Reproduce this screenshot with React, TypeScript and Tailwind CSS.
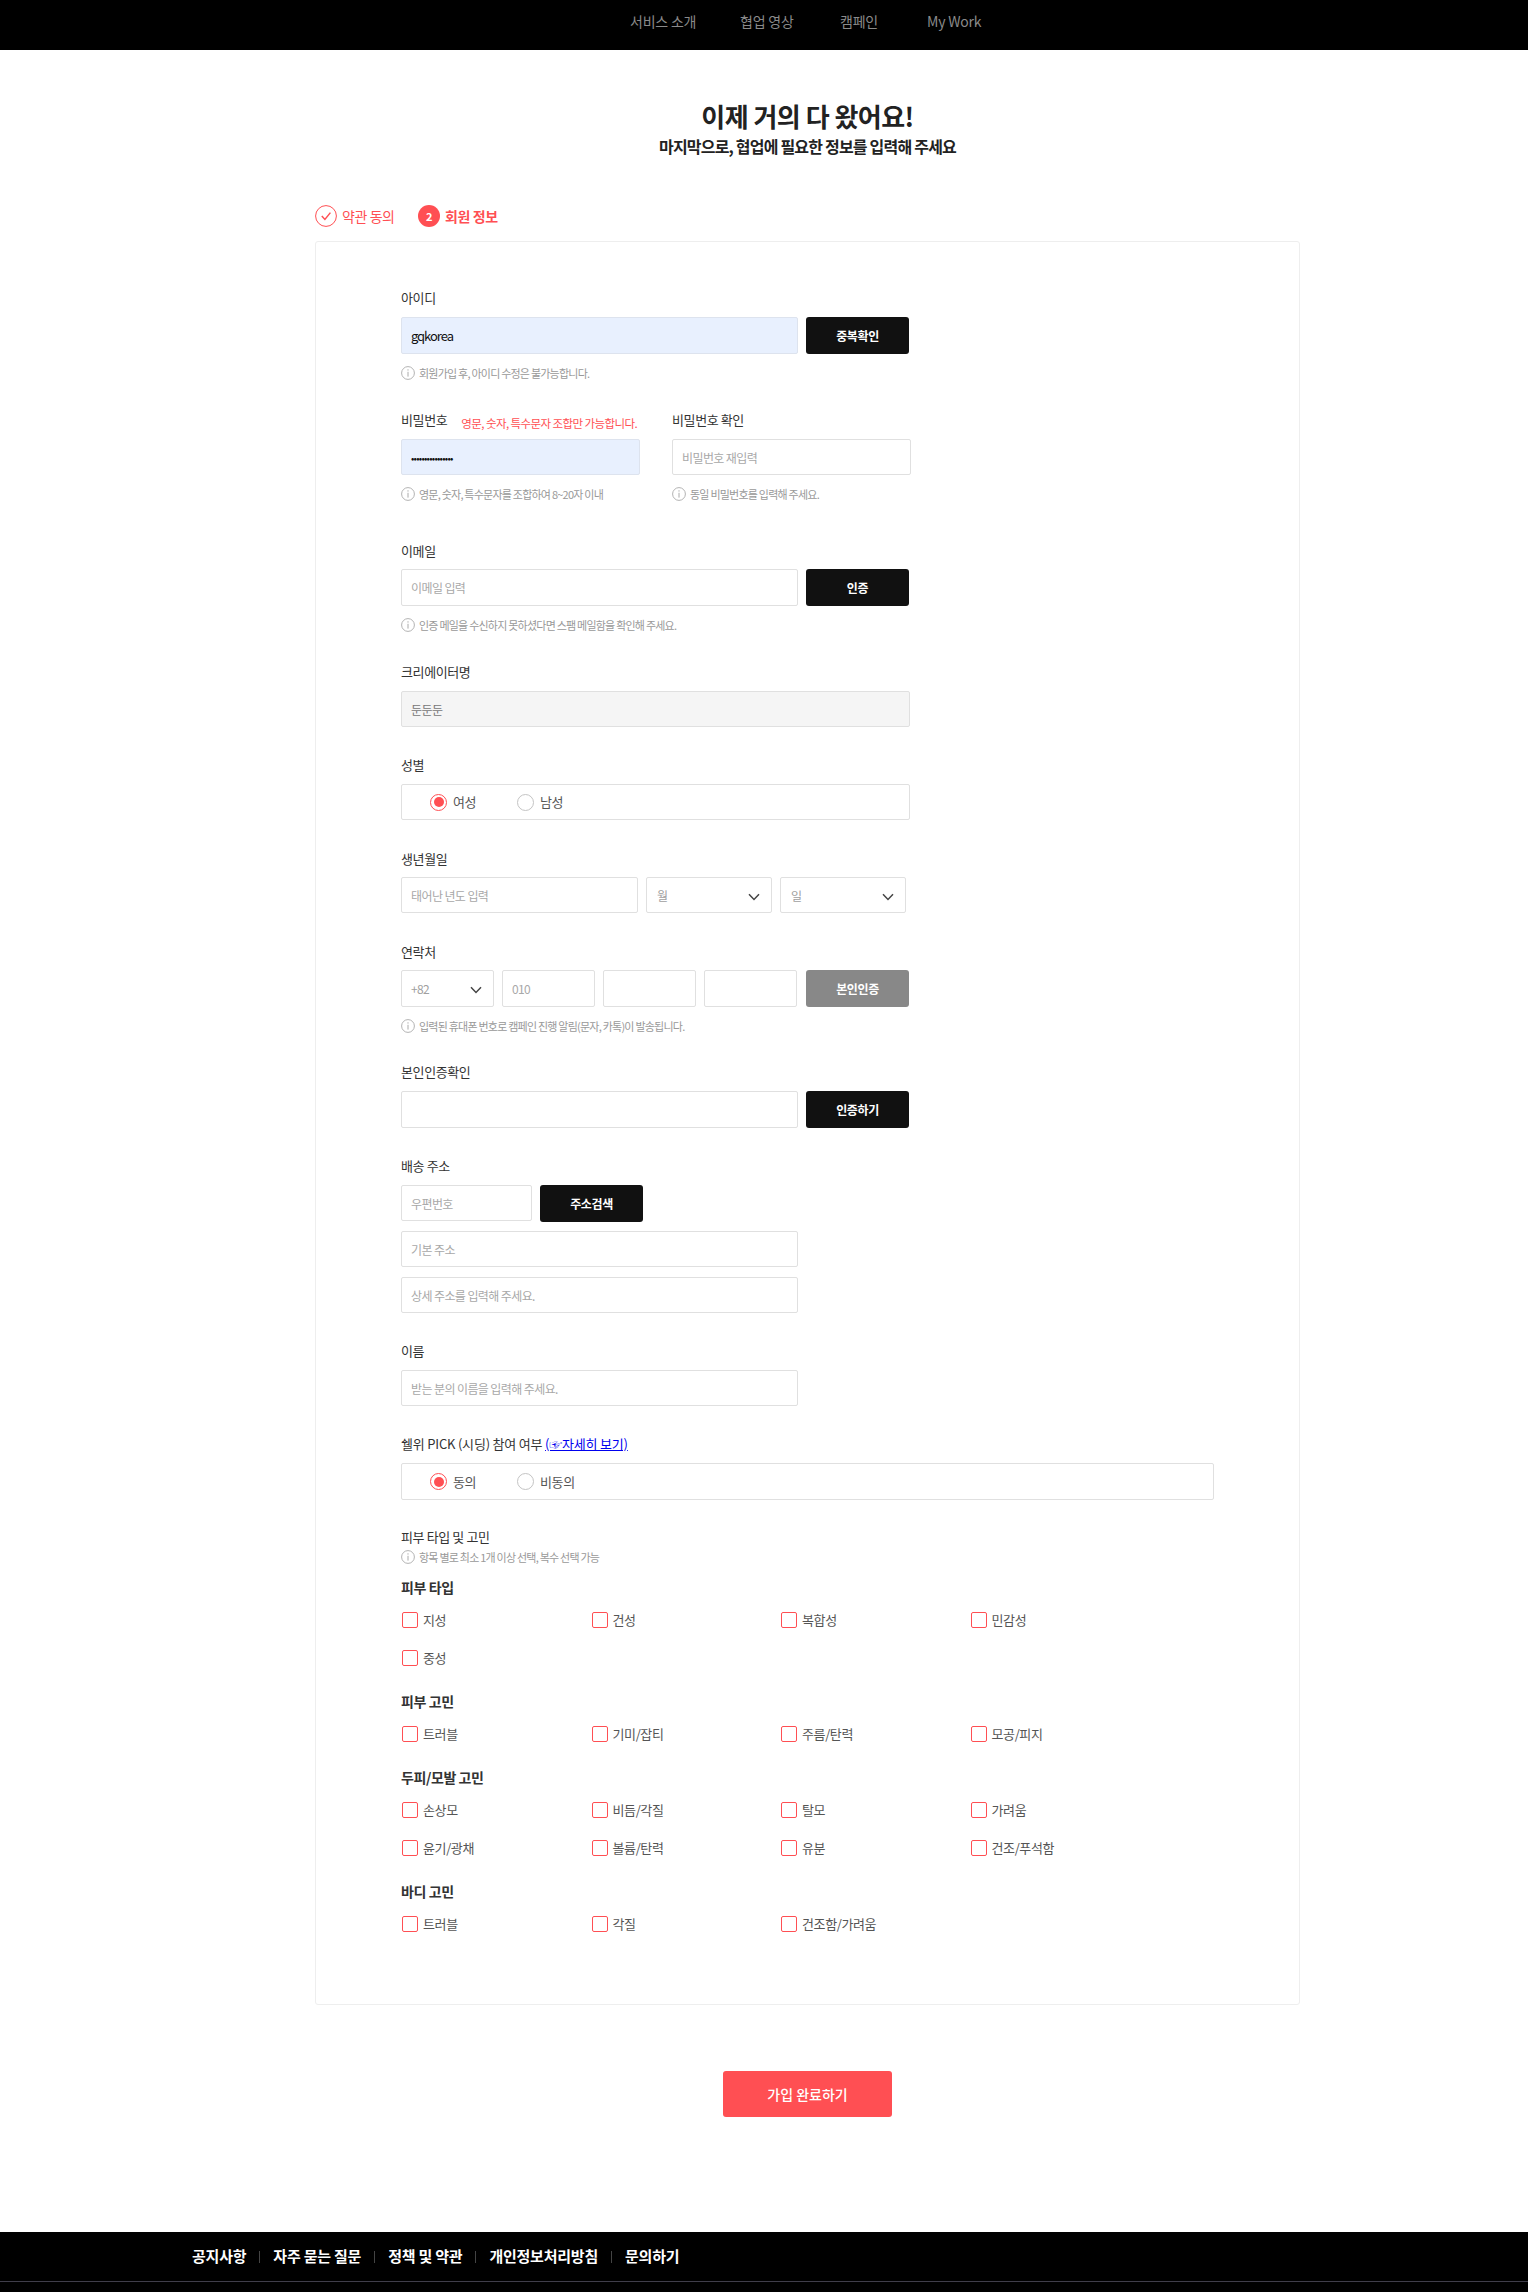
const inputCls =
  "h-[36px] w-full rounded-[2px] border border-[#e0e0e0] bg-white px-[9px] text-[12px] tracking-[-0.05em] text-[#333] outline-none placeholder:text-[#a8a8a8]";

const Label = ({ children, className = "" }: { children: React.ReactNode; className?: string }) => (
  <div className={`h-5 text-[13px] leading-5 tracking-[-0.03em] text-[#333] ${className}`}>{children}</div>
);

const InfoIcon = () => (
  <svg width="14" height="14" viewBox="0 0 14 14" fill="none" className="shrink-0">
    <circle cx="7" cy="7" r="6.4" stroke="#aaa" strokeWidth="0.9" />
    <path d="M7 5.8V10.6" stroke="#aaa" strokeWidth="1" />
    <circle cx="7" cy="3.9" r="0.7" fill="#aaa" />
  </svg>
);

const Help = ({ children, className = "" }: { children: React.ReactNode; className?: string }) => (
  <div className={`flex h-5 items-center gap-[4px] text-[11px] tracking-[-0.07em] text-[#999] ${className}`}>
    <InfoIcon />
    <span>{children}</span>
  </div>
);

const DarkButton = ({ children, className = "" }: { children: React.ReactNode; className?: string }) => (
  <button className={`h-[37px] w-[103px] shrink-0 rounded-[3px] bg-[#111] text-[12px] font-bold tracking-[-0.03em] text-white ${className}`}>
    {children}
  </button>
);

const Radio = ({ label, checked, className = "" }: { label: string; checked?: boolean; className?: string }) => (
  <label className={`flex items-center gap-[6px] text-[13px] tracking-[-0.03em] text-[#555] ${className}`}>
    <span className={`flex size-[17px] items-center justify-center rounded-full border ${checked ? "border-[#ff4f53]" : "border-[#c4c4c4]"}`}>
      {checked && <span className="size-[10px] rounded-full bg-[#ff4f53]" />}
    </span>
    {label}
  </label>
);

const RadioBox = ({ a, b, className = "" }: { a: string; b: string; className?: string }) => (
  <div className={`flex items-center rounded-[2px] border border-[#e0e0e0] pl-[28px] ${className}`}>
    <Radio label={a} checked className="w-[87px]" />
    <Radio label={b} />
  </div>
);

const Chevron = () => (
  <svg width="12" height="8" viewBox="0 0 12 8" fill="none" className="pointer-events-none absolute right-[11px] top-[15px]">
    <path d="M1 1.2L6 6.4L11 1.2" stroke="#444" strokeWidth="1.5" />
  </svg>
);

const Select = ({ value, className = "" }: { value: string; className?: string }) => (
  <div className={`relative h-[36px] shrink-0 rounded-[2px] border border-[#e0e0e0] px-[9px] text-[12px] leading-[35px] tracking-[-0.05em] text-[#a0a0a0] ${className}`}>
    {value}
    <Chevron />
  </div>
);

const CheckGroup = ({ title, items, className = "" }: { title: string; items: string[]; className?: string }) => (
  <div className={className}>
    <div className="h-5 text-[14px] font-bold leading-5 tracking-[-0.03em] text-[#333]">{title}</div>
    <div className="mt-[14px] grid grid-cols-[189.5px_189.5px_189.5px_189.5px] gap-y-[21px]">
      {items.map((item) => (
        <label key={item} className="flex h-[17px] items-center gap-[5px] text-[13px] tracking-[-0.03em] text-[#555]">
          <span className="ml-px size-[16px] shrink-0 rounded-[2px] border border-[#ff4f53]" />
          {item}
        </label>
      ))}
    </div>
  </div>
);

const navItems = [
  { label: "서비스 소개", w: "w-[110px]" },
  { label: "협업 영상", w: "w-[100px]" },
  { label: "캠페인", w: "w-[87px]" },
  { label: "My Work", w: "w-[55px]" },
];

const footerItems = ["공지사항", "자주 묻는 질문", "정책 및 약관", "개인정보처리방침", "문의하기"];

export default function App() {
  return (
    <div className="min-h-[2292px] bg-white font-['Noto_Sans_CJK_KR',sans-serif]">
      <header className="flex h-[50px] bg-black pl-[630px] pt-[11px]">
        {navItems.map((item) => (
          <a key={item.label} className={`${item.w} h-5 whitespace-nowrap text-[14px] leading-5 tracking-[-0.015em] text-[#8a8a8a]`}>
            {item.label}
          </a>
        ))}
      </header>

      <main className="ml-[315px] w-[985px]">
        <div className="pt-[48px] text-center">
          <h1 className="h-9 text-[26px] font-bold leading-9 tracking-[-0.02em] text-[#222]">이제 거의 다 왔어요!</h1>
          <p className="h-6 text-[16px] font-bold leading-6 tracking-[-0.05em] text-[#222]">마지막으로, 협업에 필요한 정보를 입력해 주세요</p>
        </div>

        <div className="mt-[47px] mb-[14px] flex h-[22px] items-center text-[14px] tracking-[-0.03em] text-[#ff4f53]">
          <svg width="22" height="22" viewBox="0 0 22 22" fill="none">
            <circle cx="11" cy="11" r="10.4" stroke="#ff4f53" strokeWidth="1" />
            <path d="M6.8 11L9.9 14.4L15.4 7.6" stroke="#ff4f53" strokeWidth="1.5" />
          </svg>
          <span className="ml-[5px] w-[76px]">약관 동의</span>
          <span className="flex size-[22px] items-center justify-center rounded-full bg-[#ff4f53] text-[11px] font-bold text-white">2</span>
          <span className="ml-[5px] font-bold">회원 정보</span>
        </div>

        <form className="rounded-[3px] border border-[#eee] pb-[72px] pl-[85px] pt-[46px]">
          <Label>아이디</Label>
          <div className="mt-[9px] flex gap-2">
            <input readOnly defaultValue="gqkorea" className={`${inputCls} !h-[37px] !w-[397px] !border-[#dde3ee] !bg-[#e8f0fe] !text-[13px] !tracking-[-0.08em] !text-[#111]`} />
            <DarkButton>중복확인</DarkButton>
          </div>
          <Help className="mt-[9px]">회원가입 후, 아이디 수정은 불가능합니다.</Help>

          <div className="mt-[27px] flex gap-[32px]">
            <div className="w-[239px]">
              <div className="flex">
                <Label>비밀번호</Label>
                <span className="ml-[14px] mt-[7px] whitespace-nowrap text-[11.5px] leading-[12px] tracking-[-0.05em] text-[#ff4f53]">영문, 숫자, 특수문자 조합만 가능합니다.</span>
              </div>
              <input readOnly type="password" defaultValue="aaaaaaaaaaaaaaaa" className={`${inputCls} mt-[9px] !border-[#dde3ee] !bg-[#e8f0fe] !text-[10px] !tracking-[-0.8px] !text-[#111]`} />
              <Help className="mt-[9px]">영문, 숫자, 특수문자를 조합하여 8~20자 이내</Help>
            </div>
            <div className="w-[239px]">
              <Label>비밀번호 확인</Label>
              <input placeholder="비밀번호 재입력" className={`${inputCls} mt-[9px]`} />
              <Help className="mt-[9px]">동일 비밀번호를 입력해 주세요.</Help>
            </div>
          </div>

          <Label className="mt-[37px]">이메일</Label>
          <div className="mt-2 flex gap-2">
            <input placeholder="이메일 입력" className={`${inputCls} !h-[37px] !w-[397px]`} />
            <DarkButton>인증</DarkButton>
          </div>
          <Help className="mt-[9px]">인증 메일을 수신하지 못하셨다면 스팸 메일함을 확인해 주세요.</Help>

          <Label className="mt-[27px]">크리에이터명</Label>
          <input readOnly defaultValue="둔둔둔" className={`${inputCls} mt-[9px] !w-[509px] !bg-[#f5f5f5] !text-[#777]`} />

          <Label className="mt-[28px]">성별</Label>
          <RadioBox a="여성" b="남성" className="mt-[9px] h-[36px] w-[509px]" />

          <Label className="mt-[29px]">생년월일</Label>
          <div className="mt-2 flex gap-2">
            <input placeholder="태어난 년도 입력" className={`${inputCls} !w-[237px]`} />
            <Select value="월" className="w-[126px] pl-[10px]" />
            <Select value="일" className="w-[126px] pl-[10px]" />
          </div>

          <Label className="mt-[29px]">연락처</Label>
          <div className="mt-2 flex gap-2">
            <Select value="+82" className="!h-[37px] w-[93px]" />
            <input placeholder="010" className={`${inputCls} !h-[37px] !w-[93px]`} />
            <input className={`${inputCls} !h-[37px] !w-[93px]`} />
            <input className={`${inputCls} !h-[37px] !w-[93px]`} />
            <DarkButton className="ml-[1px] !bg-[#888]">본인인증</DarkButton>
          </div>
          <Help className="mt-[9px]">입력된 휴대폰 번호로 캠페인 진행 알림(문자, 카톡)이 발송됩니다.</Help>

          <Label className="mt-[26px]">본인인증확인</Label>
          <div className="mt-[9px] flex gap-2">
            <input className={`${inputCls} !h-[37px] !w-[397px]`} />
            <DarkButton>인증하기</DarkButton>
          </div>

          <Label className="mt-[28px]">배송 주소</Label>
          <div className="mt-[9px] flex gap-2">
            <input placeholder="우편번호" className={`${inputCls} !w-[131px]`} />
            <DarkButton>주소검색</DarkButton>
          </div>
          <input placeholder="기본 주소" className={`${inputCls} mt-[9px] block !w-[397px]`} />
          <input placeholder="상세 주소를 입력해 주세요." className={`${inputCls} mt-[10px] block !w-[397px]`} />

          <Label className="mt-[28px]">이름</Label>
          <input placeholder="받는 분의 이름을 입력해 주세요." className={`${inputCls} mt-[9px] block !w-[397px]`} />

          <Label className="mt-[28px] !tracking-[-0.015em]">
            쉘위 PICK (시딩) 참여 여부{" "}
            <a className="text-[#0000ee] underline">(☞자세히 보기)</a>
          </Label>
          <RadioBox a="동의" b="비동의" className="mt-[9px] h-[37px] w-[813px]" />

          <Label className="mt-[27px]">피부 타입 및 고민</Label>
          <Help>항목 별로 최소 1개 이상 선택, 복수 선택 가능</Help>

          <CheckGroup className="mt-[10px]" title="피부 타입" items={["지성", "건성", "복합성", "민감성", "중성"]} />
          <CheckGroup className="mt-[25px]" title="피부 고민" items={["트러블", "기미/잡티", "주름/탄력", "모공/피지"]} />
          <CheckGroup className="mt-[25px]" title="두피/모발 고민" items={["손상모", "비듬/각질", "탈모", "가려움", "윤기/광채", "볼륨/탄력", "유분", "건조/푸석함"]} />
          <CheckGroup className="mt-[25px]" title="바디 고민" items={["트러블", "각질", "건조함/가려움"]} />
        </form>

        <div className="mt-[66px] flex justify-center">
          <button className="h-[46px] w-[169px] rounded-[3px] bg-[#ff4f53] text-[14px] font-medium text-white">가입 완료하기</button>
        </div>
      </main>

      <footer className="mt-[115px] h-[60px] bg-black">
        <div className="flex h-[50px] items-center border-b border-[#3f3d4a] pl-[192px]">
          {footerItems.map((item, i) => (
            <div key={item} className="flex items-center">
              {i > 0 && <span className="ml-[13px] mr-[13px] h-3 w-px bg-[#444]" />}
              <a className="whitespace-nowrap text-[15px] font-bold tracking-[-0.015em] text-white">{item}</a>
            </div>
          ))}
        </div>
      </footer>
    </div>
  );
}
